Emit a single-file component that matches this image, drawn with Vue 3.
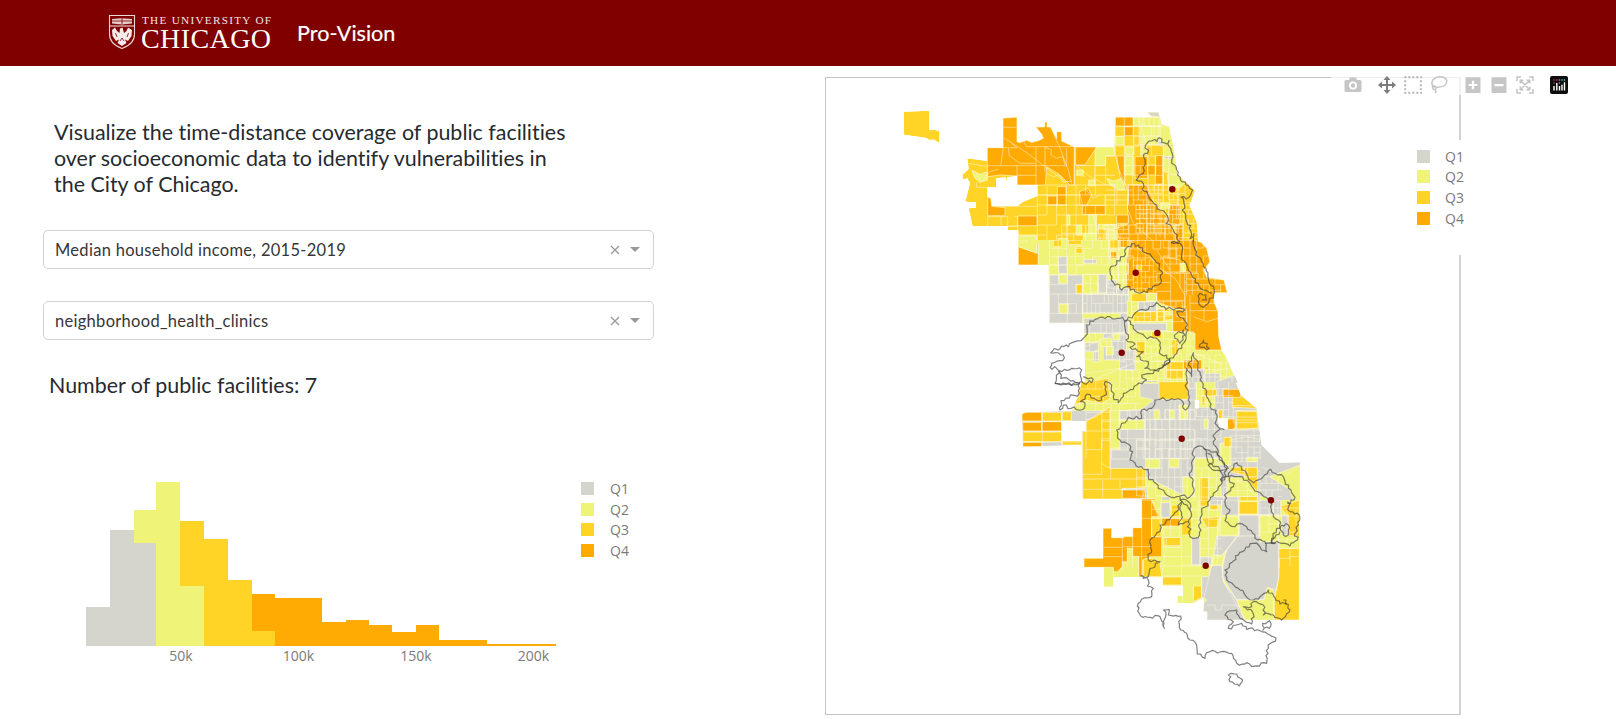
<script setup>
const quartiles = ['Q1', 'Q2', 'Q3', 'Q4']

// Histogram: [class, left, right, top, bottom?] against a baseline at y = 647
const bars = [
  ['q1', 86, 110.3, 607.7], ['q1', 110.3, 134.4, 531], ['q1', 134.4, 156, 544],
  ['q2', 134.4, 156, 511.3, 544], ['q2', 156, 180, 482.7], ['q2', 180, 203.6, 587],
  ['q3', 180, 203.6, 522.3, 587], ['q3', 203.6, 228, 540.3], ['q3', 228, 251.6, 581.3], ['q3', 251.6, 274.6, 632],
  ['q4', 251.6, 274.6, 594.7, 632], ['q4', 274.6, 321.6, 599.3], ['q4', 321.6, 345.6, 623.3], ['q4', 345.6, 369.3, 620.7],
  ['q4', 369.3, 392, 625.7], ['q4', 392, 415.5, 632.7], ['q4', 415.5, 439, 625.7], ['q4', 439, 487, 641.3], ['q4', 487, 556.4, 644.7],
]
const ticks = [['50k', 181], ['100k', 298.5], ['150k', 416], ['200k', 533.5]]

const cells = (s) => s.split(',').map((r) => {
  const [a, b, c, d] = r.trim().split(/\s+/)
  return `M${a} ${b}H${c}V${d}H${a}Z`
}).join('')

// Street mesh: [x1, y1, x2, y2, stepX, stepY]; some block sides are left out so tracts merge
const mesh = (list) => {
  let k = 7
  const keep = () => { k = (k * 41 + 29) % 127; return k % 10 < 8 }
  return list.map(([x1, y1, x2, y2, sx, sy]) => {
    const px = sx || x2 - x1, py = sy || y2 - y1
    let d = ''
    if (sx) for (let x = x1; x <= x2; x += sx) for (let y = y1; y < y2; y += py) if (keep()) d += `M${x} ${y}V${Math.min(y + py, y2)}`
    if (sy) for (let y = y1; y <= y2; y += sy) for (let x = x1; x < x2; x += px) if (keep()) d += `M${x} ${y}H${Math.min(x + px, x2)}`
    return d
  }).join('')
}

// Adds small deterministic irregularities to travel-time boundaries
const rough = (s) => {
  const n = s.trim().split(/\s+/).map(Number)
  let d = `M${n[0]} ${n[1]}`
  let k = n[0]
  for (let i = 2; i < n.length; i += 2) {
    const ax = n[i - 2], ay = n[i - 1], dx = n[i] - ax, dy = n[i + 1] - ay
    const len = Math.hypot(dx, dy) || 1
    const parts = Math.max(1, Math.round(len / 8))
    for (let j = 1; j < parts; j++) {
      k = (k * 37 + 17) % 101
      const o = (k / 101 - 0.5) * 12
      d += `L${(ax + dx * j / parts - dy / len * o).toFixed(1)} ${(ay + dy * j / parts + dx / len * o).toFixed(1)}`
    }
    d += `L${n[i]} ${n[i + 1]}`
  }
  return d
}

const regions = [
  {
    id: 'north', x: 880, y: 95, base: 'q3',
    land: 'M72 50L148 47V106L163 104L178 109V144L163 134H145L140 129L125 127L72 119ZM369 69L411 67V140L418 143L440 136L455 142L475 137L490 130L485 118L468 96H494V81H501V96H512L530 132V110H545V138L583 156H703L706 66H815L802 52H836L845 90L866 92L882 165L893 238L945 287L935 315L928 330L950 380L955 438V445H475V510H415V406H383V393L278 394L266 340L288 338V322L256 320L270 265L262 250L250 254L247 240L266 222L262 190L322 198V158H369ZM349 250V277H322V305L333 310L335 334H411L430 320L472 303V270H411V243L381 247L380 260L376 247Z',
    fills: [
      ['q4', 'M369 69L411 67V140L418 143L440 136L455 142L475 137L490 130L485 118L468 96H494V81H501V96H512L530 132V110H545V138L583 156V270H570L540 240L500 215L496 270H411V243L362 240L322 245V158H369ZM587 156H650L615 210H587ZM710 183H733V270L720 245ZM598 290L625 280L635 300L620 330H600ZM323 308L333 310L335 334L375 338V362H323ZM745 270H800L820 320L860 365V385L895 420L905 445H955V445H712V400L745 385L742 330Z'],
      ['q4', 'M415 455L475 475V510H415Z'],
      ['q4', cells('706 66 760 93,733 95 760 122,765 185 803 250,826 182 848 267,803 210 826 240,532 275 558 330,503 303 532 330,607 332 677 358,413 363 471 392,710 360 745 385,866 330 900 390,886 390 908 440')],
      ['q2', 'M650 156H703V183H677V212H645V168ZM850 155H880L893 240L870 235L852 230ZM862 238L893 240L915 262L900 280L865 270ZM415 420H470V475L415 455ZM276 226L300 238L322 230V255L300 262L283 248ZM680 250L700 258L725 250L735 285H715L690 270Z'],
      ['q2', cells('760 66 843 93,780 93 880 150,706 124 732 150,735 155 762 180,733 183 760 240,782 155 800 180,626 360 650 415,655 388 710 402,475 440 535 450,535 430 562 450,590 390 605 420,610 415 650 445,590 225 610 240,840 325 870 340,626 255 645 272,562 360 570 390,680 406 710 445')],
      ['q1', 'M802 52H836L840 66L812 62ZM831 138L843 135L850 150H835ZM852 184H880V191H852Z'],
    ],
    roads: mesh([[472, 270, 705, 445, 29, 30], [645, 183, 705, 270, 32, 29], [706, 66, 850, 180, 27, 29], [762, 66, 845, 150, 15, 28], [735, 183, 850, 270, 23, 29], [745, 270, 900, 330, 15, 15], [768, 330, 895, 415, 11, 14], [895, 330, 955, 445, 15, 14], [720, 390, 890, 445, 27, 27], [655, 390, 745, 445, 15, 13], [800, 270, 940, 330, 23, 26], [677, 285, 745, 330, 34, 15], [323, 365, 411, 395, 20, 30], [545, 390, 640, 445, 18, 25]]) + 'M369 97H411M365 125L390 140L450 180L495 215L555 260M369 158H411L395 145M322 212H362L370 158M362 212H560M411 212V270M411 241H470M468 156V270M495 156V230M512 96L540 160L565 225L575 265M385 160L388 182L420 205L465 205M495 156L515 165L512 180L530 190L548 185L555 210M500 235L520 245L540 240L548 262L575 258M583 156V270M430 137L440 155H583M640 360L650 400L665 445M700 156L715 220L745 290L742 340L760 385L810 430L830 445M775 66L800 150M615 210L590 212L625 242L680 270M598 290L608 330M615 280L640 310L660 300M266 205L322 215M290 235L305 260L330 230L355 222M290 262V277H322M850 150V330M866 180V300M411 334H472M413 363V445M383 393H415M872 92L868 150M415 425L470 425V475M475 445V510M560 160V215M587 212H645V270M587 240L615 244M472 300H600M472 330H600M770 355H865M768 370H865M768 385H860M780 330V415M800 330V430M820 330V415M840 345V425M855 365V430',
    outlines: ['768 255 790 235 795 210 790 180 803 175 797 150 815 138 831 140 838 128 845 142 860 147 867 136 872 160 875 195 888 215 893 240 902 256 925 272 938 285 932 300 918 312 903 306 912 325 907 345 918 375 932 392 930 430 942 415 940 440', '768 255 790 265 787 283 803 297 818 320 840 345 862 362 858 385 880 405 892 420 900 440 873 443'],
  },
  {
    id: 'west', x: 1020, y: 240, base: 'q2',
    land: 'M-5 0L-5 9H55V75H85L88 250L192 248L195 428H175V430H655L640 400L618 350L605 330L596 290L594 215L582 185V158H622L612 120L560 112L552 90L570 65L560 25L545 8L525 0Z',
    fills: [
      ['q1', cells('115 50 142 100,190 58 230 70,88 105 188 250,188 163 325 220,235 103 260 160,260 120 290 163,290 145 325 165,192 235 325 280,300 220 325 285,355 185 410 215,342 250 440 272,195 308 235 335,220 335 235 365,250 280 320 360,299 330 345 390,360 422 412 430,505 385 555 430,555 400 600 430')],
      ['q1', 'M590 425L645 405L655 430H590Z'],
      ['q2', cells('117 105 142 130,118 192 145 220,322 183 335 235,190 103 233 160,240 295 275 320,258 320 280 345,280 280 300 300,-5 0 20 9')],
      ['q4', 'M330 0H525L545 8L560 25L570 65L552 90L560 112L612 120L622 158H582V185L594 215L596 290L605 330H525V280L500 275V215L460 205L410 185V160L365 158L320 145V60Z'],
      ['q4', cells('458 208 500 275,490 360 545 387,300 0 330 22,272 35 290 55')],
      ['q3', cells('168 133 187 160,335 160 380 185,340 215 410 245,412 205 432 245,435 225 458 240,350 305 375 345,440 365 490 390,440 390 490 417,100 0 125 20,145 0 185 14,168 20 187 40,268 0 300 28,295 70 325 100,350 75 365 90,410 205 455 215,455 300 475 345,395 275 425 295,418 425 500 430,555 380 565 390')],
      ['q3', 'M180 430L265 415V430Z'],
      ['q2', cells('482 70 497 95,380 160 410 182,295 72 318 120,440 240 458 275')],
    ],
    roads: mesh([[88, 0, 325, 75, 26, 25], [88, 75, 188, 250, 27, 29], [188, 163, 325, 222, 13, 27], [188, 103, 325, 163, 24, 27], [265, 0, 340, 165, 15, 24], [340, 60, 410, 158, 12, 17], [330, 0, 470, 60, 23, 27], [430, 0, 570, 100, 20, 24], [410, 100, 500, 210, 42, 27], [500, 100, 622, 165, 17, 17], [192, 250, 340, 365, 17, 27], [335, 185, 500, 245, 19, 15], [340, 275, 520, 365, 18, 22], [300, 365, 500, 430, 19, 25], [500, 345, 660, 430, 17, 22]]) + 'M330 0L365 35L395 55L420 85L465 115L495 165V210M430 50L480 60V145M195 320L280 285L320 275M192 400L300 385L410 345L520 280M195 428L320 380M500 330L610 375M575 395L650 380M520 230L560 245L594 235M410 30L450 90M510 165V330M552 190V240M510 190H594M510 212H594M480 70L497 95',
    outlines: ['520 0 525 30 535 50 550 80 565 115 581 140 580 165 565 190 550 202 535 185 540 160 558 165 560 180 545 180', '453 8 480 10 485 50 500 75 515 105 535 130 550 150 575 160', '270 95 290 62 312 50 318 25 335 12 355 15 375 38 395 50 418 80 428 100 415 135 395 148 365 158 345 155 320 140 305 150 300 135 285 135 270 95', '322 240 350 215 385 208 410 187 425 200 460 210 495 208 470 215 490 235 503 270 490 310 470 340 440 370 400 390 375 385 385 365 350 350 370 335 330 322 345 312 318 300 325 285 315 262 322 240', '325 240 340 265 375 290 415 300 418 340 440 345 450 365 425 375', '470 280 490 270 495 285 480 310 465 295 470 280', '538 322 550 300 568 325 538 322', '322 240 262 230 225 238 200 255 195 290 165 305 145 320 125 318 92 338 130 345 128 362 95 370 90 382 110 385 122 415 160 422 185 425 185 390 155 385 118 392', '185 425 215 428 220 418 190 410', '118 392 105 430 180 430', '380 420 365 405 400 400 450 360', '540 420 530 360 520 338 505 375 515 410 500 385 500 420'],
  },
  {
    id: 'south', x: 1000, y: 380, base: 'q1',
    land: 'M245 5L235 50L215 92L80 97L66 103L69 200L245 195L248 357H425V365H900V247L838 248L785 195L770 85L722 45L708 8V5ZM187 123H257V153H245V183H187ZM585 60H597V85H585ZM652 115H683V148H660Z',
    fills: [
      ['q2', 'M330 5H420V50L460 60L425 88L360 92L360 208H305V92H215L240 60L330 55ZM436 290L548 345V350L583 345V235H655L660 270L665 365H445ZM810 290L900 255V365L880 365L870 330Z'],
      ['q2', cells('360 120 433 148,462 90 477 118,508 90 522 115,537 75 563 118,612 117 625 145,588 5 645 82,437 237 480 265,508 235 537 262,548 290 583 350,660 190 693 255,680 292 773 350,740 232 773 245,420 5 475 10,780 350 800 365')],
      ['q3', 'M245 5L325 5L330 55L305 70L258 60L215 80ZM258 125L330 80V265H436V325H367V357H248V155H258ZM697 50L722 45L770 85L697 82ZM710 92H770L775 145L710 150ZM735 290H773V335ZM690 262H733V285L690 275ZM845 365H900V360L880 370Z'],
      ['q3', cells('127 97 185 123,187 95 214 122,68 156 185 185,187 183 245 195,477 5 565 58,610 28 650 48,655 90 667 115,672 172 695 200,600 293 625 365,720 350 773 365,733 262 773 290,605 48 615 75')],
      ['q1', cells('335 210 390 237,360 92 390 118,485 350 510 365,630 350 680 365,567 5 585 25')],
      ['q4', cells('66 97 125 123,125 125 185 153,68 127 125 153,68 187 125 200,668 28 722 52,683 117 705 148,367 330 436 355,425 357 468 365')],
    ],
    roads: mesh([[258, 97, 333, 235, 48, 28], [215, 5, 420, 92, 24, 22], [305, 92, 435, 210, 26, 28], [435, 90, 585, 235, 15, 29], [410, 180, 585, 350, 19, 28], [590, 5, 700, 118, 16, 21], [583, 120, 665, 235, 20, 28], [583, 235, 680, 365, 22, 29], [690, 150, 785, 245, 18, 17], [685, 245, 780, 365, 29, 29], [780, 290, 845, 350, 18, 20], [700, 60, 775, 150, 75, 17], [495, 60, 585, 118, 15, 29]]) + 'M127 97V198M66 125H187M66 155H187M185 97V198M68 186H245M245 195V155M330 80L290 110L258 120M305 250L335 268M305 180V250M332 210V297M248 297H436M248 283H305V250M700 290L773 350M785 260L840 290L900 260M690 180L740 170L785 180M360 330L436 322M248 328H368L380 325M308 300V357M360 297V325M425 357L436 330M710 120H770M710 92L770 95M435 92V235M435 118H585M435 148H585M410 180H660M450 118V200M468 118V200M486 118V235M508 118V235',
    outlines: ['165 10 238 10 238 40 183 62 180 90 190 75 213 85 245 90 255 70 240 65 262 42 290 60 305 60 318 35 315 5 335 15 340 50 355 68 370 40 410 15 440 0', '560 0 560 25 565 60 563 85 550 85 548 65 515 56 465 60 455 85 425 90 425 115 385 112 365 130 350 150 360 180 380 190 398 215 390 240 415 262 445 268 445 290 475 325 500 345 530 350 570 350 582 335 580 300 570 290 578 240 583 205 610 202 620 230 640 260 670 270 685 265 660 230 640 185 645 160 672 148 645 130 648 90 630 80 620 35 600 0', '610 205 650 215 680 265 662 315 640 340 630 360', '622 220 640 240 625 255 665 280 668 305', '540 350 570 390', '685 290 710 248 725 270 760 308 790 290 812 268 850 290 865 325 885 352 862 370', '665 300 685 290 720 290 760 325 812 362', '690 290 700 320 680 340 675 360'],
  },
  {
    id: 'far-south', x: 1060, y: 500, base: 'q2',
    land: 'M245 0V83H218V108H191V113H155V85H129V175H72V202H132V260H159V231H308V257H368V288H352V310H400L430 293L432 315L430 335H441V360H718V0Z',
    fills: [
      ['q4', 'M245 0H275L298 50H275V110H305V170H275L248 180V228H236V170H218V145H202V185H187V200L172 215H160V202H72V175H129V85H155V113H191V110H218V83H245Z'],
      ['q4', cells('305 55 360 78')],
      ['q3', 'M250 178L275 175L300 185L305 230H250ZM655 145H718V360H643V300L655 240ZM425 55L478 50L472 82L440 82ZM660 20L718 0V110L680 105V45ZM400 258H425V293L400 305Z'],
      ['q3', cells('275 55 305 110,312 112 362 137,334 15 358 50,308 231 365 255,365 52 395 105,537 5 593 42,420 0 447 18,450 10 475 30')],
      ['q1', 'M470 108H535L500 150L487 165H460ZM530 108L600 105L657 130V230L640 300H530L487 230L490 190L500 150ZM455 197L485 195L490 245L530 300L555 360H441V335H430V310L440 300L425 290V230H445Z'],
      ['q1', cells('303 8 330 52,395 112 420 195,420 170 455 195,537 45 598 108,593 0 640 45,485 0 535 45,640 0 662 45,665 45 685 105,450 0 485 15')],
      ['q2', 'M460 168H493L485 195H455ZM530 300H612L622 262L640 270V360H555Z'],
      ['q2', cells('600 45 655 125,480 50 535 105')],
    ],
    roads: mesh([[275, 0, 420, 110, 28, 28], [420, 0, 485, 195, 26, 29], [600, 0, 718, 130, 27, 24]]) + 'M308 112H362M308 142H365M308 170H395M308 198H425M308 228H425M365 112V257M395 112V195M365 195H455M425 230V290M129 142H187M132 170H187M187 113V210M218 83V200M191 140H275M218 170H275M245 83V228M245 55H275M203 140V200M275 0L320 120L305 230M455 197L445 240L430 300M487 0L470 130L455 197M500 150L487 190L490 245L555 360M440 315H465V330H485V315H525L550 322M657 145H718M690 145V175H658V205M690 200V170H718M640 300L643 360M368 257V310M400 258V290M160 202V231M236 230V170M530 298H612L622 262L655 270M487 165L530 110M537 0V105M595 0V108M537 45H640M655 130V240',
    outlines: ['360 0 390 10 395 45 385 65 355 75 362 60 360 30 365 5 340 45 300 75 300 95 270 120 275 150 265 180 300 185 270 205 265 230 240 228 250 235 265 240 262 258 280 265 275 290 245 298 232 318 248 352 300 350 313 385 318 345 310 330 328 328 325 345 362 348 362 390 380 400 390 420 410 435 412 462 435 475 450 455 495 455 515 460 530 490 560 488 575 500 620 490 625 445 648 415 630 405 600 392 560 388 545 370 505 385 520 365 495 345 530 330 540 355 575 372 577 335 550 320 575 320 580 305 610 315 610 345 640 345 665 360 690 330 675 310 660 312 625 270 600 290 580 300 540 270 500 240 495 210 535 165 580 130 620 155 615 125 585 115 560 80 540 70 525 80 495 62 510 30 495 0', '385 65 390 110 415 112 420 60 425 35 450 0', '505 525 530 522 548 540 538 558 510 545 505 525', '608 392 608 370 628 362 628 385 612 385', '682 5 690 35 718 45 715 75 705 100 712 120 690 138 665 130 635 130 640 100 660 85 655 60 640 50 632 5', '665 75 685 75 685 105 670 105 665 75', '615 130 645 130 635 115 660 95', '670 300 678 300 678 315'],
  },
]
const clinics = [[1172.3, 189.3], [1135.7, 272.7], [1157.3, 333], [1121.7, 352.7], [1181.7, 438.7], [1271, 500.3], [1205.7, 565.7]]
const selects = ['Median household income, 2015-2019', 'neighborhood_health_clinics']
</script>

<template>
  <div class="page">
    <header class="topbar">
      <svg class="logo" width="164" height="46" viewBox="0 -4 164 46">
        <path d="M1.5 1.5H26.5V20C26.5 28 21 32 14 34.5C7 32 1.5 28 1.5 20Z" class="shield" />
        <path d="M4 5L13.5 4.2L24 5V9.5L14 10.5L4 9.5Z" class="shield-book" />
        <path d="M4 7H24M14 4V10" class="shield-lines" />
        <path d="M2 12H26" class="shield" />
        <path d="M4 16L7 13.5L9 17L11.5 19L12 14.5L14.5 13.5L16 19L18.5 17L20 13.5L24 16L23.5 22L20 27L17 25.5L18.5 29L14 32L9.5 29L11 25.5L8 27L4.5 22Z" class="phoenix" />
        <path d="M7.5 19L9 23M20.5 19L19 23M12 27L14 24L16 27" class="shield-lines" />
        <text x="34" y="10" textLength="129" class="logo-small">THE UNIVERSITY OF</text>
        <text x="33" y="34" textLength="130" class="logo-big">CHICAGO</text>
      </svg>
      <span class="brand">Pro-Vision</span>
    </header>

    <main class="content">
      <section class="controls">
        <p class="intro">Visualize the time-distance coverage of public facilities<br>over socioeconomic data to identify vulnerabilities in<br>the City of Chicago.</p>
        <div v-for="s in selects" :key="s" class="select">
          <span class="value">{{ s }}</span>
          <svg class="clear" width="10" height="10" viewBox="0 0 10 10"><path d="M1 1L9 9M9 1L1 9" /></svg>
          <span class="arrow"></span>
        </div>
        <p class="count">Number of public facilities: 7</p>
        <div class="chart-row">
          <svg class="histogram" width="480" height="196" viewBox="81 474 480 196">
            <rect v-for="(b, i) in bars" :key="i" :class="b[0]" :x="b[1]" :y="b[3]" :width="b[2] - b[1]" :height="(b[4] || 647) - b[3]" />
            <text v-for="t in ticks" :key="t[0]" :x="t[1]" y="662" text-anchor="middle" class="tick">{{ t[0] }}</text>
          </svg>
          <ul class="legend">
            <li v-for="q in quartiles" :key="q"><i :class="q.toLowerCase()"></i>{{ q }}</li>
          </ul>
        </div>
      </section>

      <section class="map-panel">
        <svg class="map" width="636" height="638" viewBox="825 77 636 638">
          <defs>
            <clipPath v-for="r in regions" :id="r.id" :key="r.id"><path :d="r.land" clip-rule="evenodd" /></clipPath>
          </defs>
          <g v-for="r in regions" :key="r.id" :transform="`translate(${r.x} ${r.y}) scale(.33333)`">
            <g :clip-path="`url(#${r.id})`">
              <path :d="r.land" :class="r.base" fill-rule="evenodd" />
              <path v-for="(f, i) in r.fills" :key="i" :d="f[1]" :class="[f[0], 'tract']" />
              <path :d="r.roads" class="roads" />
            </g>
          </g>
          <g v-for="r in regions" :key="r.id + '-iso'" :transform="`translate(${r.x} ${r.y}) scale(.33333)`">
            <path v-for="(o, i) in r.outlines" :key="i" :d="rough(o)" class="isochrone" />
          </g>
          <circle v-for="(c, i) in clinics" :key="i" :cx="c[0]" :cy="c[1]" r="3.2" class="clinic" />
        </svg>
        <ul class="legend map-legend">
          <li v-for="q in quartiles" :key="q"><i :class="q.toLowerCase()"></i>{{ q }}</li>
        </ul>
        <div class="modbar">
          <div class="group">
            <svg viewBox="0 0 18 18"><path class="lit" fill-rule="evenodd" d="M1 4H5L6 1.5H12L13 4H16Q17.5 4 17.5 5.5V14.5Q17.5 16 16 16H2Q.5 16 .5 14.5V5.5Q.5 4 2 4ZM9 5.5A4 4 0 1 0 9 13.5A4 4 0 1 0 9 5.5ZM9 7.3A2.2 2.2 0 1 1 9 11.7A2.2 2.2 0 1 1 9 7.3Z" /></svg>
          </div>
          <div class="group">
            <svg viewBox="0 0 18 18"><path class="dark" d="M9 0L12.5 4H10V8H14V5.5L18 9L14 12.5V10H10V14H12.5L9 18L5.5 14H8V10H4V12.5L0 9L4 5.5V8H8V4H5.5Z" /></svg>
            <svg viewBox="0 0 18 18"><path class="dots" d="M.3 1.2H18M.3 16.8H18M1.2 4.3V14M16.8 4.3V14" /></svg>
            <svg viewBox="0 0 18 18"><path class="stroke" d="M5 11C1 10 1 5 4 2.8C8-.2 17 0 16.7 5.5C16.4 10 11 11.5 6 11.2M3.8 9.6A2 2 0 1 0 5.8 13Q7 10.5 3.8 9.6M5 13L6 17" /></svg>
          </div>
          <div class="group">
            <svg viewBox="0 0 18 18"><path class="lit" fill-rule="evenodd" d="M1.5 1.2H16.5V17H1.5ZM7.8 4.7V7.9H4.5V10.1H7.8V13.3H10.2V10.1H13.5V7.9H10.2V4.7Z" /></svg>
            <svg viewBox="0 0 18 18"><path class="lit" fill-rule="evenodd" d="M1.5 1.2H16.5V17H1.5ZM4.5 8V10.3H13.5V8Z" /></svg>
            <svg viewBox="0 0 18 18"><path class="stroke" d="M1 5V1H5M13 1H17V5M17 13V17H13M5 17H1V13M5 5L13 13M13 5L5 13M4.3 7.5V4.3H7.5M10.5 4.3H13.7V7.5M13.7 10.5V13.7H10.5M7.5 13.7H4.3V10.5" /></svg>
          </div>
          <div class="group">
            <svg viewBox="0 0 18 18"><rect width="18" height="18" rx="2" fill="#0d0d0d" /><path d="M4 10V14.5M6.8 7V14.5M9.5 10V14.5M12 8.8V14.5M14.5 6.3V14.5" stroke="#fff" stroke-width="1.4" /><path d="M3.4 4H4.7M6.1 4H7.5M3.4 7H4.7" stroke="#d0265f" stroke-width="1.4" /><path d="M8.8 4H10.1M8.8 7H10.1" stroke="#8c7fae" stroke-width="1.4" /><path d="M11.4 4H12.7M13.8 4H15.1" stroke="#5bb9d6" stroke-width="1.4" /></svg>
          </div>
        </div>
      </section>
    </main>
  </div>
</template>

<style>
body { margin: 0; background: #fff; overflow: hidden; }
</style>

<style scoped>
.page { width: 1616px; height: 719px; overflow: hidden; background: #fff; color: #262b30; font-family: Lato, sans-serif; font-variant-ligatures: none; }
.topbar { height: 66px; box-sizing: border-box; padding-left: 108px; display: flex; align-items: center; background: #800000; }
.logo { display: block; overflow: visible; }
.logo-small { font: 11.2px "Liberation Serif", serif; fill: #f3e5e5; }
.logo-big { font: 28px "Liberation Serif", serif; fill: #fff; }
.shield { fill: none; stroke: #ecd5d5; stroke-width: 1.1; }
.shield-book { fill: #e6cccc; }
.shield-lines { fill: none; stroke: #800000; stroke-width: .8; }
.phoenix { fill: #f6eaea; }
.brand { margin-left: 25px; font-size: 21.6px; color: #fff; line-height: 30px; -webkit-text-stroke: .2px #fff; }
.content { display: flex; align-items: flex-start; }
.controls { width: 825px; box-sizing: border-box; padding: 54px 0 0 43px; }
.intro { margin: 0 0 33px 11px; font-size: 21.45px; line-height: 25.8px; white-space: nowrap; }
.select { width: 611px; height: 39px; box-sizing: border-box; border: 1.5px solid #d2d2d2; border-radius: 5px; display: flex; align-items: center; padding: 0 13px 0 11px; margin-bottom: 32px; color: #363636; }
.value { flex: 1; font-size: 16.5px; letter-spacing: .29px; }
.clear { margin-right: 10px; }
.clear path { stroke: #999; stroke-width: 1.3; }
.arrow { border: 5px solid transparent; border-top-color: #999; border-bottom-width: 0; }
.count { margin: 1px 0 75px 6px; font-size: 21.4px; line-height: 26px; }
.chart-row { display: flex; padding-left: 38px; }
.histogram { display: block; }
.histogram rect { shape-rendering: crispEdges; }
.tick { font: 14px "Open Sans", sans-serif; fill: #7a7a7a; }
.q1 { fill: #d5d5cd; background: #d5d5cd; }
.q2 { fill: #eff377; background: #eff377; }
.q3 { fill: #ffd427; background: #ffd427; }
.q4 { fill: #ffab04; background: #ffab04; }
.legend { list-style: none; margin: 5px 0 0 20px; padding: 0; font: 14px "Open Sans", sans-serif; color: #7a7a7a; }
.legend li { display: flex; align-items: center; height: 20.6px; }
.legend i { width: 13px; height: 13px; margin-right: 16px; }
.map-panel { position: relative; width: 636px; height: 638px; box-sizing: border-box; margin-top: 11px; border: 1px solid #c4c4c4; border-right: 2px solid #d2d2d2; }
.map { position: absolute; left: -1px; top: -1px; }
.map-legend { position: absolute; left: 580px; top: 62px; width: 70px; height: 115px; box-sizing: border-box; margin: 0; padding: 6px 0 0 11px; background: #fff; }
.map-legend i { margin-right: 15px; }
.modbar { position: absolute; left: 505px; top: -3px; height: 20px; width: 245px; box-sizing: border-box; padding-left: 8.8px; display: flex; gap: 9px; align-items: center; background: rgba(255, 255, 255, .7); }
.group { display: flex; }
.group svg { width: 18px; height: 18px; margin: 0 3.85px; flex: none; }
.lit { fill: #c6c6c6; }
.dark { fill: #7c7c7c; }
.dots { fill: none; stroke: #b4b4b4; stroke-width: 2; stroke-dasharray: 2 2; }
.stroke { fill: none; stroke: #c4c4c4; stroke-width: 1.5; }
.tract { stroke: #fff8dc; stroke-width: 2.4; stroke-opacity: .8; }
.roads { fill: none; stroke: #fffae6; stroke-width: 2.4; stroke-opacity: .62; }
.isochrone { fill: none; stroke: #3c3c3c; stroke-opacity: .64; stroke-width: 3.6; stroke-linejoin: round; }
.clinic { fill: #800000; }
</style>
